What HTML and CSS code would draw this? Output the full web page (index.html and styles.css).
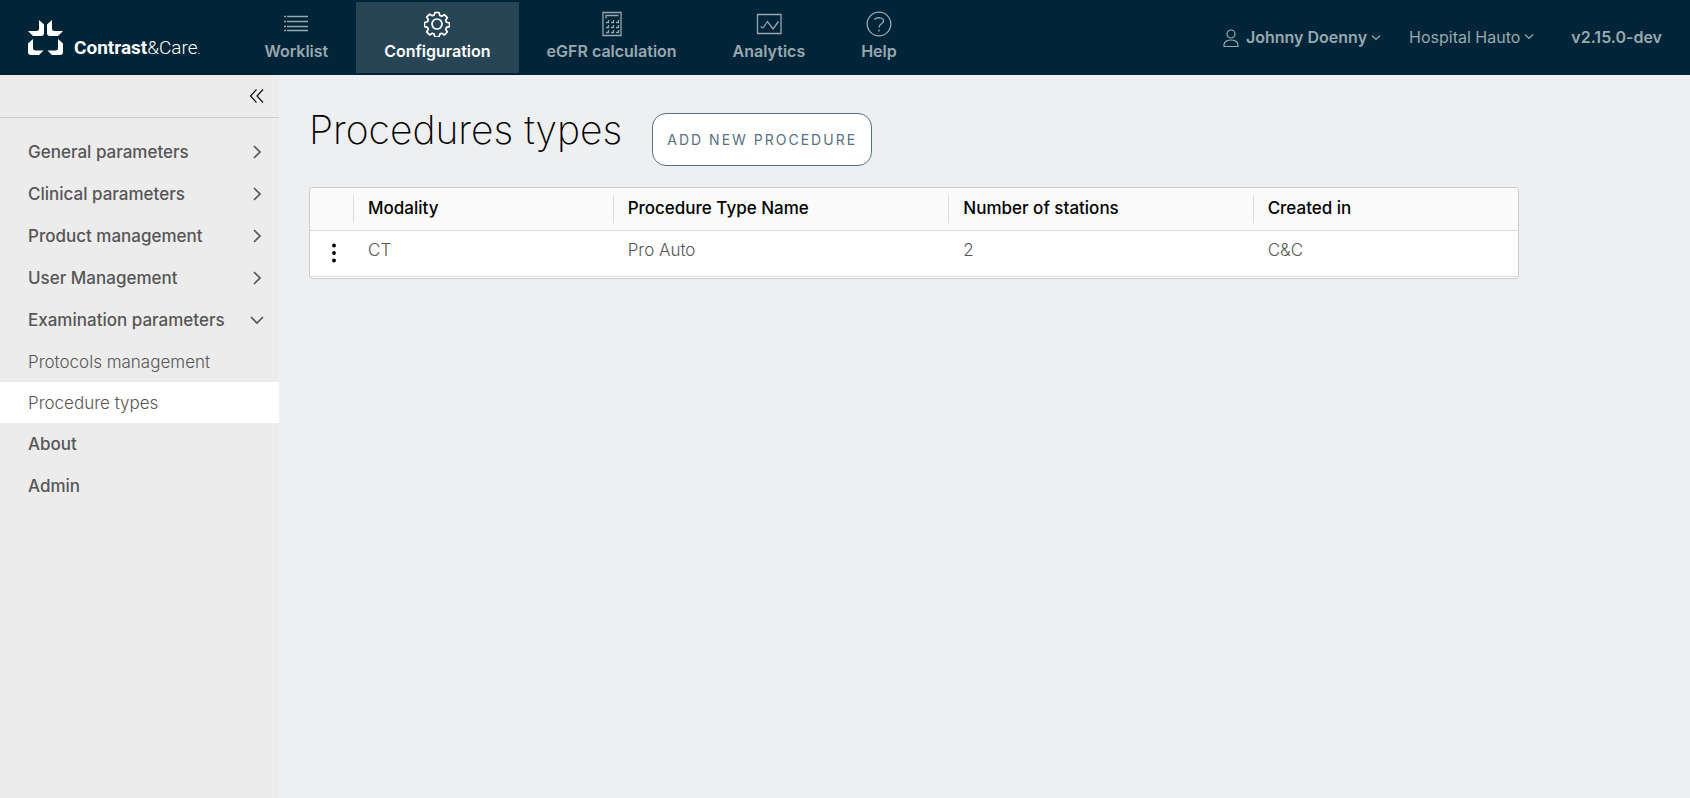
FILE: index.html
```html
<!DOCTYPE html>
<html lang="en">
<head>
<meta charset="utf-8">
<title>Procedures types</title>
<link rel="stylesheet" href="styles.css">
</head>
<body>
<header class="header">
  <a class="brand" href="#">
    <svg class="brand-mark" viewBox="0 0 36 36" aria-hidden="true">
      <path d="M11 0 L16 4.500 V13 Q16 16 13 16 H5 L0 11 H8.500 Q11 11 11 8.500 Z"/>
      <path d="M24 0 L19 4.500 V13 Q19 16 22 16 H30 L35 11 H26.500 Q24 11 24 8.500 Z"/>
      <path d="M5 19 L0 23.500 V32 Q0 35 3 35 H11 L15.500 30.500 H7.500 Q5 30.500 5 28 Z"/>
      <path d="M30 19 L35 23.500 V32 Q35 35 32 35 H24 L19.500 30.500 H27.500 Q30 30.500 30 28 Z"/>
    </svg>
    <span class="brand-name"><b>Contrast</b>&amp;Care<small>.</small></span>
  </a>
  <nav class="tabs" aria-label="Main">
    <a class="tab" href="#">
      <svg viewBox="0 0 26 26" aria-hidden="true"><path d="M1 5.500h2M4 5.500h21M1 10.500h2M4 10.500h21M1 15.500h2M4 15.500h21M1 19.500h2M4 19.500h21"/></svg>
      Worklist</a>
    <a class="tab active" href="#" aria-current="page">
      <svg class="gear" viewBox="0 0 26 26" aria-hidden="true"><circle cx="13" cy="13" r="5"/><path d="M11 1.500h4l.8 3 1.900.8 2.700-1.600 2.900 2.900-1.600 2.700.8 1.900 3 .8v3.600l-3 .8-.8 1.900 1.600 2.700-2.900 2.900-2.700-1.600-1.900.8-.8 3h-4l-.8-3-1.900-.8-2.700 1.600-2.900-2.900 1.600-2.700-.8-1.900-3-.8V11.500l3-.8.8-1.900-1.600-2.700 2.900-2.900 2.700 1.600 1.900-.8z"/></svg>
      Configuration</a>
    <a class="tab" href="#">
      <svg viewBox="0 0 26 26" aria-hidden="true"><path d="M4 1.500h18v23H4zM7 7.500V4.500h12.500"/><path d="M7 11.500h2.500V9M12 11.500h2.500V9M17 11.500h2.500V9M7 16.500h2.500V14M12 16.500h2.500V14M17 16.500h2.500V14M7 21.500h2.500V19M12 21.500h2.500V19M17 21.500h2.500V19"/></svg>
      eGFR calculation</a>
    <a class="tab" href="#">
      <svg viewBox="0 0 26 26" aria-hidden="true"><path d="M1.500 3.500h23.500v19H1.500zM4.500 15.500l2.500 1.500 4.500-6.500 5.500 7.500 5.500-7.500"/></svg>
      Analytics</a>
    <a class="tab" href="#">
      <svg viewBox="0 0 26 26" aria-hidden="true"><circle cx="13" cy="13" r="11.800"/><path d="M8.500 8.500c2-2.500 9-2.500 9 1.500 0 3-4.500 2.500-4.500 6.500M13 18.500v2"/></svg>
      Help</a>
  </nav>
  <div class="account">
    <button class="menu user" type="button">
      <svg class="person" viewBox="0 0 16 20" aria-hidden="true"><circle cx="8" cy="6" r="4"/><path d="M1 18.500v-2c0-3 4-4.500 7-4.500s7 1.500 7 4.500v2z"/></svg>
      Johnny Doenny
      <svg class="caret" viewBox="0 0 10 10" aria-hidden="true"><path d="M1 3.500l4 4 4-4"/></svg>
    </button>
    <button class="menu site" type="button">
      Hospital Hauto
      <svg class="caret" viewBox="0 0 10 10" aria-hidden="true"><path d="M1 2.500l4 4 4-4"/></svg>
    </button>
    <span class="version">v2.15.0-dev</span>
  </div>
</header>
<div class="body">
  <aside class="sidebar">
    <div class="collapse-row">
      <button class="collapse" type="button" aria-label="Collapse menu">
        <svg viewBox="0 0 16 16" aria-hidden="true"><path d="M7.500 1.500L1.500 8l6 6.500M14 1.500L8 8l6 6.500"/></svg>
      </button>
    </div>
    <nav class="side-nav" aria-label="Configuration">
      <button class="group" type="button">General parameters<svg viewBox="0 0 14 14" aria-hidden="true"><path d="M4 1l6 6-6 6"/></svg></button>
      <button class="group" type="button">Clinical parameters<svg viewBox="0 0 14 14" aria-hidden="true"><path d="M4 1l6 6-6 6"/></svg></button>
      <button class="group" type="button">Product management<svg viewBox="0 0 14 14" aria-hidden="true"><path d="M4 1l6 6-6 6"/></svg></button>
      <button class="group" type="button">User Management<svg viewBox="0 0 14 14" aria-hidden="true"><path d="M4 1l6 6-6 6"/></svg></button>
      <button class="group" type="button" aria-expanded="true">Examination parameters<svg viewBox="0 0 14 14" aria-hidden="true"><path d="M1 4l6 6 6-6"/></svg></button>
      <a class="sub" href="#">Protocols management</a>
      <a class="sub selected" href="#" aria-current="page">Procedure types</a>
      <a class="group" href="#">About</a>
      <a class="group" href="#">Admin</a>
    </nav>
  </aside>
  <main class="content">
    <div class="title-row">
      <h1>Procedures types</h1>
      <button class="add" type="button">ADD NEW PROCEDURE</button>
    </div>
    <div class="grid-frame">
      <table class="grid">
        <colgroup><col class="c-menu"><col class="c-modality"><col class="c-name"><col class="c-stations"><col></colgroup>
        <thead><tr><td></td><th scope="col">Modality</th><th scope="col">Procedure Type Name</th><th scope="col">Number of stations</th><th scope="col">Created in</th></tr></thead>
        <tbody><tr>
          <td class="actions"><button type="button" aria-label="Row actions"><svg viewBox="0 0 4 20" aria-hidden="true"><circle cx="2" cy="2.500" r="1.900"/><circle cx="2" cy="10" r="1.900"/><circle cx="2" cy="17.500" r="1.900"/></svg></button></td>
          <td>CT</td><td>Pro Auto</td><td>2</td><td>C&amp;C</td>
        </tr></tbody>
      </table>
    </div>
  </main>
</div>
</body>
</html>
```

FILE: styles.css
```css
* { box-sizing: border-box; }

body {
  margin: 0;
  min-height: 100vh;
  display: flex;
  flex-direction: column;
  font-family: Inter, "Open Sans", sans-serif;
  font-size: 17px;
  line-height: 24px;
  color: #565656;
  background: #eeeff1;
}

a { color: inherit; text-decoration: none; }
button { font: inherit; color: inherit; background: none; border: 0; padding: 0; cursor: pointer; }
svg { fill: none; stroke: currentColor; flex: none; }

.header {
  display: flex;
  height: 75px;
  background: #002538;
  color: #99a8af;
  font-size: 16px;
  border: solid #002538;
  border-width: 2px 0;
}

.brand {
  display: flex;
  align-items: flex-end;
  gap: 10px;
  padding: 0 36px 17px 28px;
  color: #fff;
}
.brand-mark { width: 36px; height: 36px; fill: #fff; stroke: none; }
.brand-name { font-family: Roboto, sans-serif; font-size: 19px; line-height: 12px; font-weight: 300; white-space: nowrap; }
.brand-name b { font-weight: 700; }
.brand-name small { font-size: 12px; }

.tabs { display: flex; font-weight: 600; }
.tab {
  display: flex;
  flex-direction: column;
  align-items: center;
  gap: 2px;
  padding: 9px 28px 0;
  white-space: nowrap;
}
.tab svg { width: 26px; height: 26px; stroke-width: 1.300; }
.tab .gear { stroke-width: 1.700; stroke-linejoin: round; }
.tab.active { background: #284555; color: #fff; }

.account {
  display: flex;
  align-items: center;
  margin-left: auto;
  padding: 0 28px 2px 0;
  white-space: nowrap;
}
.menu { display: flex; align-items: center; gap: 4px; }
.user { font-weight: 600; margin-right: 28px; }
.site { margin-right: 37px; }
.version { font-weight: 600; }
.person { width: 16px; height: 20px; margin: 2px 3px 0 0; stroke-width: 1.200; }
.caret { width: 10px; height: 10px; stroke-width: 1.200; }

.body { display: flex; flex: 1; }

.sidebar { flex: none; width: 279px; background: #ececec; }
.collapse-row {
  display: flex;
  justify-content: flex-end;
  height: 43px;
  padding: 0 14px 0 0;
  border-bottom: 1px solid #ccc;
}
.collapse { color: #111; display: flex; align-items: center; }
.collapse svg { width: 16px; height: 16px; stroke-width: 1.200; }

.side-nav { display: flex; flex-direction: column; padding-top: 13px; }
.group, .sub {
  display: flex;
  align-items: center;
  justify-content: space-between;
  padding: 0 15px 0 28px;
  text-align: left;
}
.group { height: 42px; font-weight: 500; }
.group svg { width: 14px; height: 14px; stroke-width: 1.700; }
.sub { height: 41px; font-weight: 300; }
.selected { background: #fff; }

.content { flex: 1; padding: 38px 37px 0 30px; }
.title-row { display: flex; align-items: flex-start; gap: 30px; margin-bottom: 21px; }
h1 { margin: 0; font-size: 39px; line-height: 34px; font-weight: 200; color: #000; white-space: nowrap; }
.add {
  width: 220px;
  height: 53px;
  border: 1px solid #5a6f7f;
  border-radius: 14px;
  background: #fff;
  color: #5a6f7f;
  font-size: 14px;
  letter-spacing: 2px;
  white-space: nowrap;
}

.grid-frame {
  width: 90%;
  padding-bottom: 1px;
  border: 1px solid #ccc;
  border-radius: 3px;
  background: #fff;
  overflow: hidden;
}
.grid { width: 100%; table-layout: fixed; border-collapse: collapse; font-weight: 300; }
.c-menu { width: 43px; }
.c-modality { width: 21.500%; }
.c-name { width: 27.800%; }
.c-stations { width: 25.200%; }
.grid th, .grid td { padding: 0 0 0 15px; text-align: left; vertical-align: middle; }
.grid thead { height: 42px; background: #fafafa; border-bottom: 1px solid #ddd; }
.grid th { padding-bottom: 2px; font-weight: 500; color: #000; background: linear-gradient(#ddd, #ddd) left center / 1px 28px no-repeat; }
.grid tbody tr { height: 46px; border-bottom: 1px solid #ddd; }
.grid tbody td { padding-bottom: 6px; }
.grid tbody .actions { padding: 0 0 0 22px; color: #000; }
.actions button { display: flex; }
.actions svg { width: 4px; height: 20px; fill: currentColor; stroke: none; }
```
